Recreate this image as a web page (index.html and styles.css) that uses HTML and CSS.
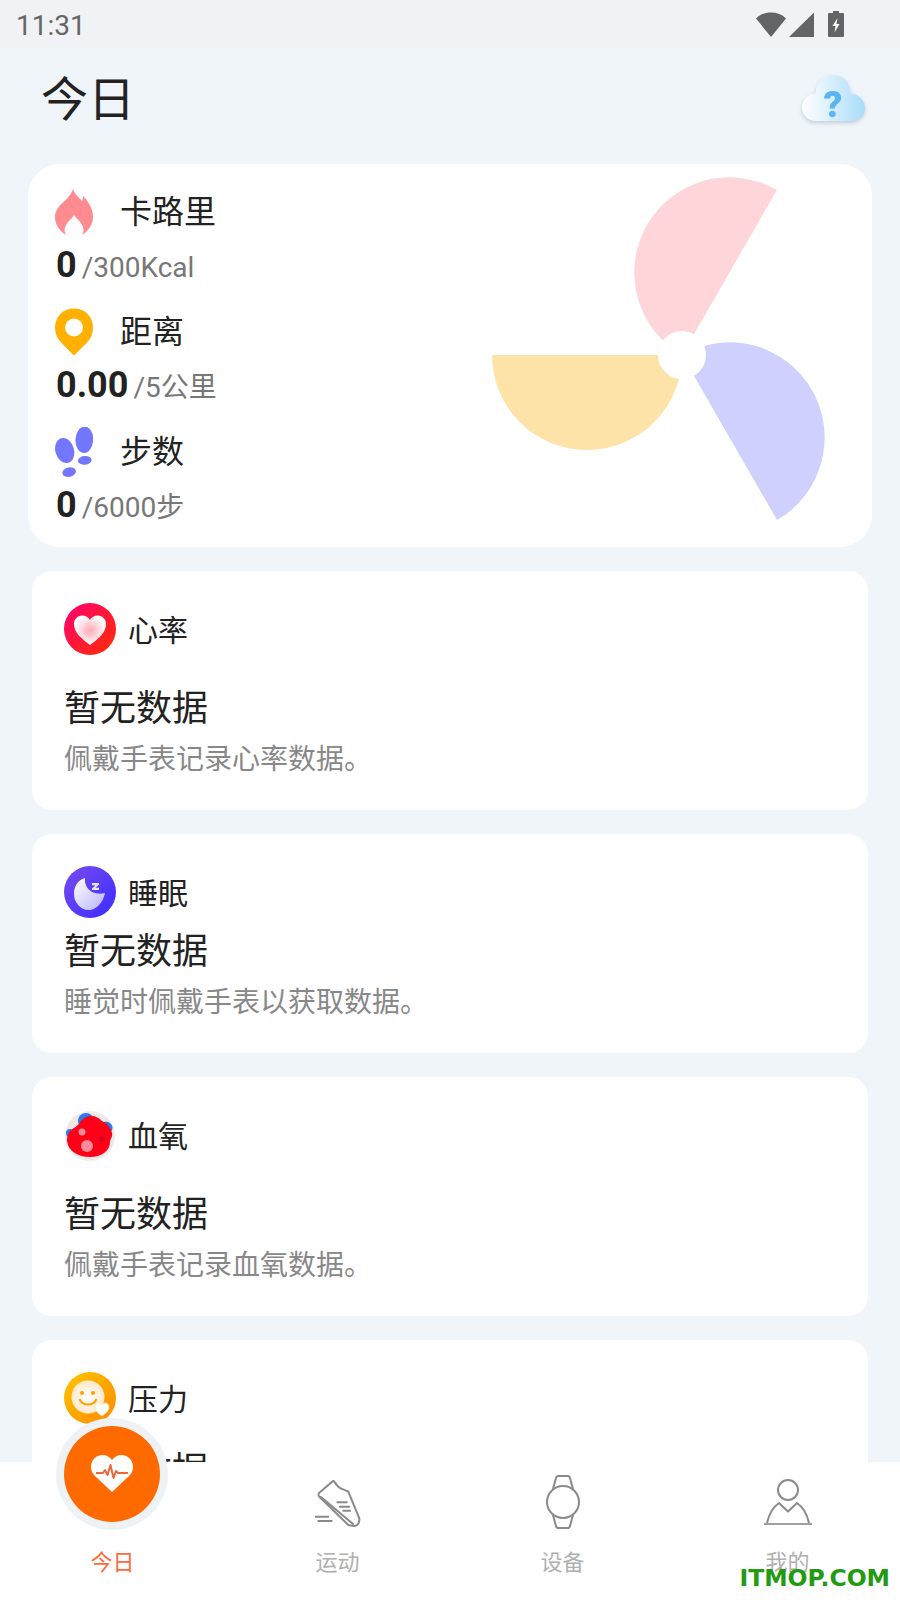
FILE: index.html
```html
<!DOCTYPE html>
<html lang="zh-CN">
<head>
  <meta charset="UTF-8" />
  <meta name="viewport" content="width=device-width, initial-scale=1.0"/>
  <title>今日</title>
  <link rel="stylesheet" href="styles.css">
</head>
<body>
  <div class="app">
    <!-- Status bar -->
    <div class="status-bar">
      <span class="status-time">11:31</span>
      <div class="status-icons">
        <svg class="icon-wifi" viewBox="0 0 30 25"><path d="M0 6.500C4 2.500 9 .6 15 .6s11 1.900 15 5.900L15 25z" fill="#636466"/></svg>
        <svg class="icon-signal" viewBox="0 0 25 25"><path d="M25 .5V25H0z" fill="#636466"/></svg>
        <svg class="icon-battery" viewBox="0 0 16 26"><path d="M5 0h6v2h4a1 1 0 0 1 1 1v22a1 1 0 0 1-1 1H1a1 1 0 0 1-1-1V3a1 1 0 0 1 1-1h4z" fill="#636466"/><path d="M9.500 7 4.500 15h3l-1 6.500 5-8.500h-3z" fill="#fff"/></svg>
      </div>
    </div>

    <main class="content">
      <header class="page-header">
        <h1>今日</h1>
        <svg class="icon-cloud" viewBox="0 0 63 46">
          <defs>
            <linearGradient id="cloudFill" x1="0" y1="0" x2="1" y2="0">
              <stop offset="0" stop-color="#ffffff"/>
              <stop offset="1" stop-color="#a9dcfa"/>
            </linearGradient>
          </defs>
          <path d="M14 46C6 46 0 40 0 32.500 0 25 6 19 13.500 18.500 13.500 8 21 0 31 0s17.500 8 17.500 18.500C56 19 63 25 63 32.500 63 40 57 46 49 46z" fill="url(#cloudFill)"/>
          <text x="31" y="42" class="cloud-mark">?</text>
        </svg>
      </header>

      <!-- Goals -->
      <section class="goal-card">
        <div class="goal-list">
          <div class="goal">
            <div class="goal-head">
              <svg class="goal-icon" viewBox="0 0 38 46"><path d="M18 0c2 6 6 8 9 12 1-2 1-3 1-5 6 6 10 13 10 21 0 8-5 14-11 18 2-3 2-7 0-10-2-4-5-6-8-10-2 4-6 6-8 10-2 3-2 7 0 10C5 42 0 36 0 28 0 16 14 12 18 0z" fill="#ff8b90"/></svg>
              <span>卡路里</span>
            </div>
            <div class="goal-value"><b>0</b><span>/300Kcal</span></div>
          </div>
          <div class="goal">
            <div class="goal-head">
              <svg class="goal-icon" viewBox="0 0 38 47"><path d="M19 47 6 34C2 30 0 25 0 19 0 8 8 0 19 0s19 8 19 19c0 6-2 11-6 15z" fill="#ffb000"/><circle cx="19" cy="19" r="9" fill="#fff"/></svg>
              <span>距离</span>
            </div>
            <div class="goal-value"><b>0.00</b><span>/5公里</span></div>
          </div>
          <div class="goal">
            <div class="goal-head">
              <svg class="goal-icon" viewBox="0 0 38 51"><g fill="#7376ff"><ellipse cx="29.500" cy="13" rx="9" ry="13.500" transform="rotate(3 29.500 13)"/><ellipse cx="9.500" cy="24" rx="9.500" ry="13" transform="rotate(-16 9.500 24)"/><ellipse cx="30" cy="34" rx="7" ry="4.500" transform="rotate(-5 30 34)"/><ellipse cx="14" cy="46" rx="7" ry="4.800" transform="rotate(-14 14 46)"/></g></svg>
              <span>步数</span>
            </div>
            <div class="goal-value"><b>0</b><span>/6000步</span></div>
          </div>
        </div>
        <svg class="goal-chart" viewBox="488 175 340 350">
          <path d="M777 190A95 95 0 0 0 682 355Z" fill="#fed6d9"/>
          <path d="M682 355A95 95 0 0 1 777 520Z" fill="#d0d0ff"/>
          <path d="M492 355A95 95 0 0 0 682 355Z" fill="#fee3a9"/>
          <circle cx="682" cy="355" r="24" fill="#fff"/>
        </svg>
      </section>

      <!-- Heart rate -->
      <section class="card">
        <div class="card-head">
          <svg class="card-icon" viewBox="0 0 52 52">
            <defs>
              <linearGradient id="heartBg" x1="0" y1="0" x2="1" y2="1">
                <stop offset="0" stop-color="#ff0072"/>
                <stop offset="1" stop-color="#ff2f00"/>
              </linearGradient>
              <radialGradient id="heartFill">
                <stop offset="0" stop-color="#ffa8b4"/>
                <stop offset="1" stop-color="#ffffff"/>
              </radialGradient>
            </defs>
            <circle cx="26" cy="26" r="26" fill="url(#heartBg)"/>
            <path d="M26 42C18 36 10 30 10 21c0-5 4-8.500 8-8.500 3.500 0 6.500 1.500 8 4.500 1.500-3 4.500-4.500 8-4.500 4 0 8 3.500 8 8.500 0 9-8 15-16 21z" fill="url(#heartFill)"/>
          </svg>
          <span>心率</span>
        </div>
        <h2>暂无数据</h2>
        <p>佩戴手表记录心率数据。</p>
      </section>

      <!-- Sleep -->
      <section class="card card-tight">
        <div class="card-head">
          <svg class="card-icon" viewBox="0 0 52 52">
            <defs>
              <linearGradient id="moonBg" x1="0" y1="0" x2="1" y2="1">
                <stop offset="0" stop-color="#7a4bf0"/>
                <stop offset="1" stop-color="#3a2cff"/>
              </linearGradient>
              <linearGradient id="moonFill" x1="0" y1="0" x2="1" y2="1">
                <stop offset="0" stop-color="#ffffff"/>
                <stop offset="1" stop-color="#b9b2ff"/>
              </linearGradient>
            </defs>
            <circle cx="26" cy="26" r="26" fill="url(#moonBg)"/>
            <path d="M21 12C20 22 28 30 41 27 39 37 32 44 25 44 16 44 10 36 10 28 10 20 14 14 21 12z" fill="url(#moonFill)"/>
            <path d="M28 17h7v1.600l-3.500 3.200H35V24h-7v-1.600l3.500-3.200H28z" fill="#e9e6ff"/>
          </svg>
          <span>睡眠</span>
        </div>
        <h2>暂无数据</h2>
        <p>睡觉时佩戴手表以获取数据。</p>
      </section>

      <!-- Blood oxygen -->
      <section class="card">
        <div class="card-head">
          <svg class="card-icon" viewBox="0 0 52 52">
            <circle cx="26" cy="27" r="25" fill="#f1e9e8"/>
            <circle cx="22" cy="12" r="8" fill="#2a7bf0"/>
            <circle cx="42" cy="19" r="6.500" fill="#2a7bf0"/>
            <circle cx="6" cy="24" r="4" fill="#2a7bf0"/>
            <path d="M27 7c5 0 8 2 11 5 5 2 9 7 10 12 1 4-2 6-2 9 0 9-9 15-20 15C14 48 4 42 3 32c0-6 2-10 7-13 3-2 5-4 7-7 2-3 6-5 10-5z" fill="#ff0018"/>
            <circle cx="18" cy="23" r="3.500" fill="#ff8a98"/>
            <circle cx="23" cy="37" r="6" fill="#ff8a98"/>
            <circle cx="38" cy="30" r="2.500" fill="#d80018"/>
          </svg>
          <span>血氧</span>
        </div>
        <h2>暂无数据</h2>
        <p>佩戴手表记录血氧数据。</p>
      </section>

      <!-- Stress, cut off by the tab bar -->
      <section class="card card-last">
        <div class="card-head">
          <svg class="card-icon" viewBox="0 0 52 52">
            <defs>
              <linearGradient id="faceBg" x1="0" y1="0" x2="1" y2="1">
                <stop offset="0" stop-color="#ffc400"/>
                <stop offset="1" stop-color="#ff8a00"/>
              </linearGradient>
              <radialGradient id="faceFill">
                <stop offset="0" stop-color="#ffffff"/>
                <stop offset="1" stop-color="#ffe9cc"/>
              </radialGradient>
            </defs>
            <circle cx="26" cy="26" r="26" fill="url(#faceBg)"/>
            <circle cx="24" cy="25" r="16.500" fill="url(#faceFill)"/>
            <circle cx="18" cy="21" r="2" fill="#ffa200"/>
            <circle cx="29" cy="21" r="2" fill="#ffa200"/>
            <path d="M16 28c3 6 13 6 16 0" fill="none" stroke="#ffa200" stroke-width="2.200" stroke-linecap="round"/>
            <path d="M38 44c-4-3-7-5-7-9 0-2.500 2-4 4-4 1.500 0 2.500.7 3 2 .5-1.300 1.500-2 3-2 2 0 4 1.500 4 4 0 4-3 6-7 9z" fill="#fff" stroke="#ffd9a0" stroke-width=".6"/>
          </svg>
          <span>压力</span>
        </div>
        <h2>暂无数据</h2>
      </section>
    </main>

    <!-- Tab bar -->
    <nav class="tab-bar">
      <div class="tab-fab">
        <div class="tab-fab-inner">
          <svg viewBox="0 0 42 38"><path d="M21 37 4 21C1 18 0 15 0 12 0 5 5 0 11.500 0 15.500 0 19 2 21 5c2-3 5.500-5 9.500-5C37 0 42 5 42 12c0 3-1 6-4 9z" fill="#fff"/><path d="M5 18h7l2-3 2.500 5 3-10 3 13 2.500-7 2 2h10" fill="none" stroke="#e8693c" stroke-width="2" stroke-linejoin="round"/></svg>
        </div>
      </div>
      <div class="tab tab-active"><div class="tab-icon"></div><span>今日</span></div>
      <div class="tab">
        <div class="tab-icon">
          <svg viewBox="0 0 46 48" class="icon-shoe" fill="none" stroke="#8a8a8a" stroke-width="2" stroke-linecap="round" stroke-linejoin="round">
            <path d="M4.300 12.700 18.300.7c1.500 1 2 3 5 6 3 3 7 3 10 5l11 26.600c.5 3-1.500 7.700-4.300 7.700-3 0-5-.5-6.700-1L4.300 16.700c-1-1-1-3 0-4z"/>
            <path d="M6 17 38 44"/>
            <path d="M22.300 22.300h9.400M25 26.700h9.300M28.300 30.700H35"/>
            <path d="M0 36.700h13.300M3.300 41h13.400"/>
          </svg>
        </div>
        <span>运动</span>
      </div>
      <div class="tab">
        <div class="tab-icon">
          <svg viewBox="0 0 34 54" class="icon-watch" fill="none" stroke="#8a8a8a" stroke-width="2" stroke-linejoin="round">
            <circle cx="17" cy="27" r="16"/>
            <path d="M7 14 10 3c.3-1.500 1-2 2.500-2h9c1.500 0 2.200.5 2.500 2l3 11"/>
            <path d="M7 40l3 11c.3 1.500 1 2 2.500 2h9c1.500 0 2.200-.5 2.500-2l3-11"/>
          </svg>
        </div>
        <span>设备</span>
      </div>
      <div class="tab">
        <div class="tab-icon">
          <svg viewBox="0 0 48 46" class="icon-person" fill="none" stroke="#8a8a8a" stroke-width="2" stroke-linejoin="round">
            <circle cx="24" cy="11" r="10"/>
            <path d="M3 44C5 35 9 28 15 24l9 8.500L33 24c6 4 10 11 12 20"/>
            <path d="M0 45h48" stroke="#a0a0a0"/>
          </svg>
        </div>
        <span>我的</span>
      </div>
      <div class="watermark">ITMOP.COM</div>
    </nav>
  </div>
</body>
</html>
```
FILE: styles.css
```css
/* General Styles */
* {
  box-sizing: border-box;
}

body {
  margin: 0;
  padding: 0;
  background-color: #f0f5fa;
  color: #222;
  font-family: Roboto, "Noto Sans CJK SC", sans-serif;
}

.app {
  width: 900px;
  height: 1600px;
  display: flex;
  flex-direction: column;
  overflow: hidden;
}

/* Status bar */
.status-bar {
  height: 48px;
  flex: none;
  display: flex;
  align-items: center;
  justify-content: space-between;
  padding: 0 56px 0 16px;
  background-color: #f1f2f5;
}

.status-time {
  padding-top: 3px;
  font-size: 28px;
  color: #666;
}

.status-icons {
  display: flex;
  align-items: center;
}

.icon-wifi {
  width: 30px;
  height: 25px;
  margin-right: 3px;
}

.icon-signal {
  width: 25px;
  height: 25px;
  margin-right: 14px;
}

.icon-battery {
  width: 16px;
  height: 26px;
}

/* Content */
.content {
  flex: 1;
  min-height: 0;
  overflow: hidden;
  padding: 0 28px;
}

.page-header {
  height: 116px;
  display: flex;
  align-items: center;
  justify-content: space-between;
  padding: 0 7px 12px 13px;
}

.page-header h1 {
  margin: 0;
  font-size: 47px;
  font-weight: 400;
  line-height: 60px;
}

.icon-cloud {
  width: 63px;
  height: 46px;
  margin-top: -4px;
  overflow: visible;
  filter: drop-shadow(0 2px 2px rgba(90, 110, 130, 0.3));
}

.cloud-mark {
  font-family: Roboto, sans-serif;
  font-size: 37px;
  font-weight: 900;
  fill: #5bb5f0;
  text-anchor: middle;
}

/* Goals card */
.goal-card {
  height: 383px;
  display: flex;
  justify-content: space-between;
  padding: 0 44px 0 27px;
  background-color: #fff;
  border-radius: 32px;
}

.goal-list {
  padding-top: 23px;
}

.goal {
  height: 120px;
}

.goal-head {
  height: 50px;
  display: flex;
  align-items: center;
  font-size: 32px;
}

.goal-head span {
  margin-bottom: 6px;
}

.goal-icon {
  width: 38px;
  height: 50px;
  margin-right: 27px;
}

.goal-value {
  display: flex;
  align-items: baseline;
  height: 50px;
  margin-top: 3px;
  line-height: 50px;
  padding-left: 1px;
  font-size: 28px;
  color: #777;
}

.goal-value b {
  margin-right: 5px;
  font-size: 36px;
  color: #222;
}

.goal-chart {
  width: 340px;
  height: 350px;
  margin-top: 11px;
}

/* Cards */
.card {
  margin: 24px 4px 0;
  padding: 32px 32px 32px;
  background-color: #fff;
  border-radius: 20px;
}

.card-head {
  height: 52px;
  display: flex;
  align-items: center;
  font-size: 30px;
}

.card-head span {
  margin-bottom: 3px;
}

.card-icon {
  width: 52px;
  height: 52px;
  margin-right: 12px;
}

.card h2 {
  margin: 32px 0 0;
  font-size: 36px;
  font-weight: 400;
  line-height: 44px;
}

.card p {
  margin: 11px 0 0;
  font-size: 28px;
  line-height: 36px;
  color: #888;
}

.card-tight h2 {
  margin-top: 12px;
}

.card-last h2 {
  margin-top: 25px;
}

/* Tab bar */
.tab-bar {
  position: relative;
  height: 138px;
  flex: none;
  display: grid;
  grid-template-columns: repeat(4, 1fr);
  background-color: #fefefe;
}

.tab {
  display: flex;
  flex-direction: column;
  align-items: center;
  font-size: 22px;
  line-height: 30px;
  color: #b0b0b0;
}

.tab-active {
  color: #ff6a3c;
}

.tab-icon {
  height: 86px;
  padding-bottom: 19px;
  display: flex;
  align-items: flex-end;
}

.icon-shoe {
  width: 46px;
  height: 48px;
  margin-bottom: 1px;
}

.icon-watch {
  width: 34px;
  height: 54px;
}

.icon-person {
  width: 48px;
  height: 46px;
  margin-bottom: 4px;
}

.tab-fab {
  position: absolute;
  left: 56px;
  top: -44px;
  width: 112px;
  height: 112px;
  padding: 8px;
  border-radius: 50%;
  background-color: #eff2f4;
}

.tab-fab-inner {
  width: 96px;
  height: 96px;
  display: flex;
  align-items: center;
  justify-content: center;
  border-radius: 50%;
  background-color: #ff6a00;
}

.tab-fab-inner svg {
  width: 42px;
  height: 38px;
}

.watermark {
  position: absolute;
  right: 10px;
  bottom: 7px;
  font-family: "DejaVu Sans", sans-serif;
  font-size: 23.500px;
  font-weight: 700;
  line-height: 30px;
  color: #229a11;
}
```
